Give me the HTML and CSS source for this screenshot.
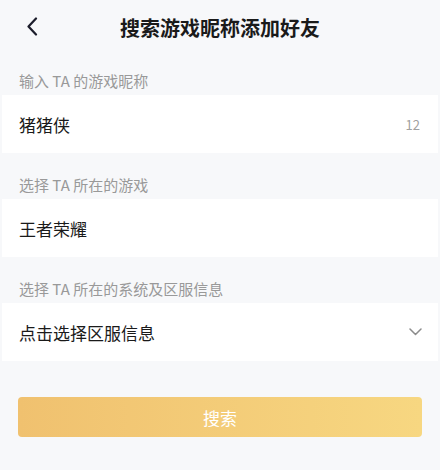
FILE: index.html
```html
<!DOCTYPE html>
<html>
<head>
<meta charset="utf-8">
<link rel="stylesheet" href="styles.css">
</head>
<body>
<div class="page">
  <div class="header">
    <span class="back">
      <svg width="12" height="19" viewBox="0 0 12 19"><path d="M10 1.5 L2.5 9.5 L10 17.5" fill="none" stroke="#1c1d2b" stroke-width="2.2" stroke-linecap="round" stroke-linejoin="round"/></svg>
    </span>
    <h1 class="title">搜索游戏昵称添加好友</h1>
  </div>

  <div class="label">输入 TA 的游戏昵称</div>
  <div class="row">
    <span class="value">猪猪侠</span>
    <span class="count">12</span>
  </div>

  <div class="label">选择 TA 所在的游戏</div>
  <div class="row">
    <span class="value">王者荣耀</span>
  </div>

  <div class="label">选择 TA 所在的系统及区服信息</div>
  <div class="row">
    <span class="value">点击选择区服信息</span>
    <svg class="arrow" width="13" height="8" viewBox="0 0 13 8"><path d="M1 1 L6.5 6.5 L12 1" fill="none" stroke="#8c8c8c" stroke-width="1.5" stroke-linecap="round" stroke-linejoin="round"/></svg>
  </div>

  <div class="btnwrap">
    <button class="search">搜索</button>
  </div>
</div>
</body>
</html>
```

FILE: styles.css
```css
html, body {
  margin: 0;
  padding: 0;
  background: #f7f8fa;
  font-family: "Noto Sans CJK SC", "Noto Sans", sans-serif;
}

.page {
  width: 440px;
  height: 470px;
  background: #f7f8fa;
}

.header {
  position: relative;
  height: 43px;
  padding-top: 6px;
  display: flex;
  align-items: center;
  justify-content: center;
}

.back {
  position: absolute;
  left: 26px;
  top: 17px;
  display: flex;
}

.title {
  margin: 0;
  font-size: 20px;
  font-weight: bold;
  color: #1a1a1a;
  line-height: 43px;
}

.label {
  padding: 22px 19px 4px;
  line-height: 20px;
  font-size: 15px;
  color: #999999;
}

.row {
  height: 58px;
  margin: 0 2px;
  padding: 0 17px;
  background: #fff;
  display: flex;
  align-items: center;
  justify-content: space-between;
}

.value {
  font-size: 17px;
  color: #1a1a1a;
}

.count {
  font-size: 13px;
  color: #a0a0a0;
  margin-right: 1px;
}

.arrow {
  margin-right: -1px;
}

.btnwrap {
  padding: 36px 18px 0;
}

.search {
  display: block;
  width: 404px;
  height: 40px;
  border: none;
  border-radius: 4px;
  background: linear-gradient(90deg, #f0c16f, #f7d781);
  color: #fff;
  font-family: "Noto Sans CJK SC", sans-serif;
  font-size: 17px;
}
```
